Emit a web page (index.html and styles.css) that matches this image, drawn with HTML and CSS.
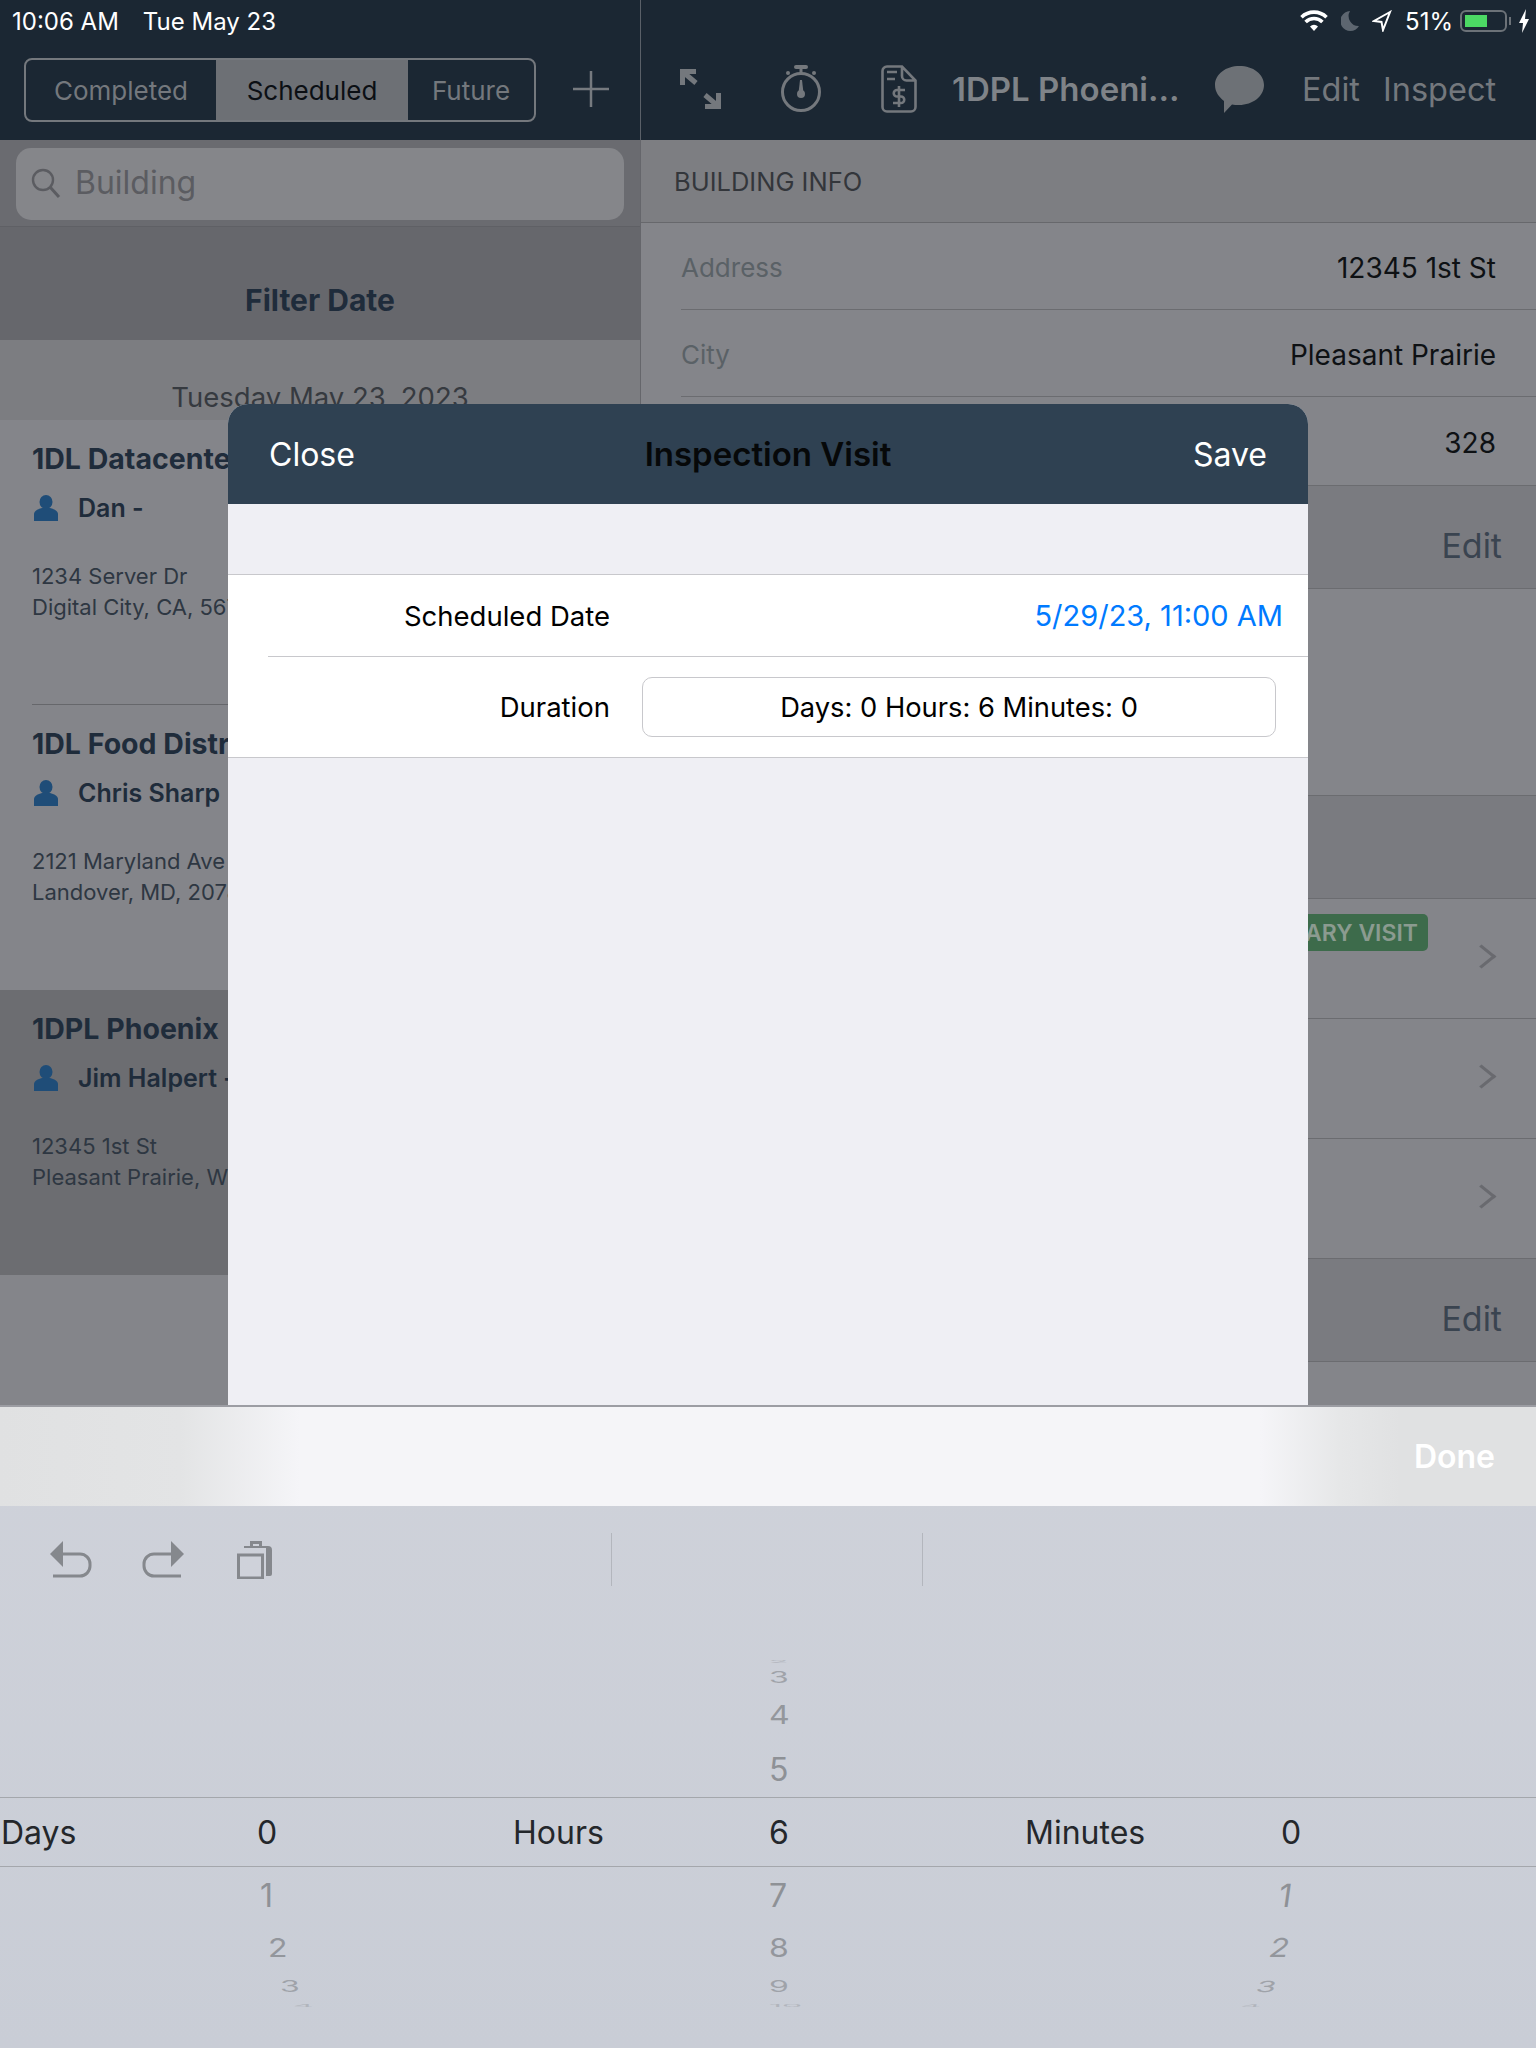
FILE: index.html
```html
<!DOCTYPE html>
<html lang="en">
<head>
    <meta charset="UTF-8">
    <title>Inspection Visit</title>
    <link rel="stylesheet" href="styles.css">
</head>
<body>
    <div class="app">
        <div class="top-bar">
            <div class="status-bar">
                <div class="status-left"><span>10:06 AM</span><span>Tue May 23</span></div>
                <div class="status-right">
                    <svg class="st-wifi" viewBox="0 0 28 22"><path d="M14 21l-4-4.600a6 6 0 0 1 8 0z" fill="#fff"/><path d="M5.600 12a12 12 0 0 1 16.800 0M1.500 7.200a18 18 0 0 1 25 0" fill="none" stroke="#fff" stroke-width="3.600"/></svg>
                    <svg class="st-moon" viewBox="0 0 18 22"><path d="M9 1a10 10 0 1 0 9 15A10 10 0 0 1 9 1z" fill="#5d6670"/></svg>
                    <svg class="st-loc" viewBox="0 0 20 22"><path d="M18 2L2 11l7.500 1L11 20z" fill="none" stroke="#fff" stroke-width="2"/></svg>
                    <span>51%</span>
                    <div class="battery"><div class="battery-fill"></div></div>
                    <div class="battery-nub"></div>
                    <svg class="st-bolt" viewBox="0 0 10 24"><path d="M7 0L0 14h4l-1 10 7-14H6z" fill="#fff"/></svg>
                </div>
            </div>
            <div class="nav-bar">
                <div class="nav-left">
                    <div class="segments">
                        <div class="segment">Completed</div>
                        <div class="segment segment-on">Scheduled</div>
                        <div class="segment segment-last">Future</div>
                    </div>
                    <svg class="plus-icon" viewBox="0 0 36 36"><path d="M18 0v36M0 18h36" stroke="#767a7f" stroke-width="2.500"/></svg>
                </div>
                <div class="nav-right">
                    <svg class="nav-expand" viewBox="0 0 41 40"><path d="M2.500 16V2.500H16M3 3l13 11M38.500 24v13.500H25M38 37L25 26" fill="none" stroke="#74787d" stroke-width="5"/></svg>
                    <svg class="nav-timer" viewBox="0 0 40 48"><circle cx="20" cy="27" r="18.500" fill="none" stroke="#74787d" stroke-width="3"/><rect x="13" y="0" width="14" height="4" rx="2" fill="#74787d"/><path d="M18.500 4h3v6h-3z" fill="#74787d"/><circle cx="7" cy="8" r="2" fill="#74787d"/><circle cx="33" cy="8" r="2" fill="#74787d"/><path d="M19 15h2l1.500 13h-5z" fill="#74787d"/><circle cx="20" cy="29" r="4" fill="#74787d"/></svg>
                    <svg class="nav-doc" viewBox="0 0 36 48"><path d="M6 1.500h15l13.500 14V42a4.500 4.500 0 0 1-4.500 4.500H6A4.500 4.500 0 0 1 1.500 42V6A4.500 4.500 0 0 1 6 1.500zM21 1.500V11a4.500 4.500 0 0 0 4.500 4.500h9M6 7h10M6 14h8" fill="none" stroke="#74787d" stroke-width="2.600"/><path d="M24 25h-8a3 3 0 0 0 0 6.500h4a3 3 0 0 1 0 6.500h-8M18 21v21" fill="none" stroke="#74787d" stroke-width="2.600"/></svg>
                    <div class="nav-title">1DPL Phoeni...</div>
                    <svg class="nav-chat" viewBox="0 0 49 48"><path d="M24.500 1C38 1 49 9 49 20S38 40 24 40c-3 0-5 0-7-.500L9 48V36C4 32 0 27 0 20 0 9 11 1 24.500 1z" fill="#6d7176"/></svg>
                    <div class="nav-links"><span>Edit</span><span>Inspect</span></div>
                </div>
            </div>
        </div>

        <div class="content">
            <div class="left-pane">
                <div class="search-row">
                    <div class="search-field">
                        <svg class="search-icon" viewBox="0 0 30 30"><circle cx="12" cy="12" r="10" fill="none" stroke="#5b5c61" stroke-width="2.400"/><path d="M19 19l9 10" stroke="#5b5c61" stroke-width="3"/></svg>
                        <span>Building</span>
                    </div>
                </div>
                <div class="filter-head">Filter Date</div>
                <div class="filter-date">Tuesday May 23, 2023</div>

                <div class="visit">
                    <div class="visit-title">1DL Datacenter</div>
                    <div class="visit-person">
                        <svg class="person-icon" viewBox="0 0 24 26"><ellipse cx="12" cy="7" rx="6.500" ry="7" fill="#1f4d78"/><path d="M0 26v-7c0-3 4-5 8-6h8c4 1 8 3 8 6v7z" fill="#1f4d78"/></svg>
                        <span>Dan -</span>
                    </div>
                    <div class="visit-address">1234 Server Dr<br>Digital City, CA, 56789</div>
                    <div class="visit-line"></div>
                </div>
                <div class="visit">
                    <div class="visit-title">1DL Food Distribution</div>
                    <div class="visit-person">
                        <svg class="person-icon" viewBox="0 0 24 26"><ellipse cx="12" cy="7" rx="6.500" ry="7" fill="#1f4d78"/><path d="M0 26v-7c0-3 4-5 8-6h8c4 1 8 3 8 6v7z" fill="#1f4d78"/></svg>
                        <span>Chris Sharp</span>
                    </div>
                    <div class="visit-address">2121 Maryland Ave<br>Landover, MD, 20785</div>
                </div>
                <div class="visit visit-on">
                    <div class="visit-title">1DPL Phoenix</div>
                    <div class="visit-person">
                        <svg class="person-icon" viewBox="0 0 24 26"><ellipse cx="12" cy="7" rx="6.500" ry="7" fill="#1f4d78"/><path d="M0 26v-7c0-3 4-5 8-6h8c4 1 8 3 8 6v7z" fill="#1f4d78"/></svg>
                        <span>Jim Halpert -</span>
                    </div>
                    <div class="visit-address">12345 1st St<br>Pleasant Prairie, WI, 53158</div>
                </div>
            </div>

            <div class="right-pane">
                <div class="section-head">BUILDING INFO</div>
                <div class="info-row"><span class="info-label">Address</span><span>12345 1st St</span></div>
                <div class="info-row"><span class="info-label">City</span><span>Pleasant Prairie</span></div>
                <div class="info-row info-row-last"><span class="info-label">Size</span><span>328</span></div>
                <div class="edit-head">Edit</div>
                <div class="blank-block"></div>
                <div class="edit-head edit-head-empty"></div>
                <div class="visit-row"><span class="badge">PRIMARY VISIT</span><span class="chevron"></span></div>
                <div class="visit-row"><span class="chevron"></span></div>
                <div class="visit-row"><span class="chevron"></span></div>
                <div class="edit-head">Edit</div>
            </div>

            <div class="modal">
                <div class="modal-head">
                    <span>Close</span>
                    <span class="modal-title">Inspection Visit</span>
                    <span>Save</span>
                </div>
                <div class="modal-rows">
                    <div class="form-row form-row-date">
                        <span class="form-label">Scheduled Date</span>
                        <span class="form-date">5/29/23, 11:00 AM</span>
                    </div>
                    <div class="form-row form-row-duration">
                        <span class="form-label">Duration</span>
                        <div class="duration-box">Days: 0 Hours: 6 Minutes: 0</div>
                    </div>
                </div>
            </div>
        </div>
    </div>

    <div class="keyboard">
        <div class="kb-accessory"><span>Done</span></div>
        <div class="kb-tools">
            <div class="kb-icons">
                <svg class="kb-icon" viewBox="0 0 42 37"><path d="M0 13L13 0v26z" fill="#85888d"/><path d="M10 13h20a10 10 0 0 1 10 10v2a10 10 0 0 1-10 10H3" fill="none" stroke="#85888d" stroke-width="3"/></svg>
                <svg class="kb-icon" viewBox="0 0 42 37"><path d="M42 13L29 0v26z" fill="#85888d"/><path d="M32 13H12A10 10 0 0 0 2 23v2a10 10 0 0 0 10 10h27" fill="none" stroke="#85888d" stroke-width="3"/></svg>
                <svg class="kb-icon kb-paste" viewBox="0 0 36 38"><path d="M7 7V5h6V0h12v5h6a4 4 0 0 1 4 4v24a2 2 0 0 1-2 2h-4V7z" fill="#85888d"/><path d="M16 3h6v2h-6z" fill="#cfd2da"/><path d="M1.500 14h24v23h-24z" fill="#cfd2da" stroke="#85888d" stroke-width="3"/></svg>
            </div>
            <div class="kb-divider"></div>
            <div class="kb-divider kb-divider-2"></div>
        </div>
        <div class="wheel-rows wheel-upper">
            <div class="wheel-col"></div>
            <div class="wheel-col">
                <div></div>
                <div class="wheel-nums">
                    <span class="num num-edge">2</span>
                    <span class="num num-far">3</span>
                    <span class="num num-mid">4</span>
                    <span class="num num-near">5</span>
                </div>
            </div>
            <div class="wheel-col"></div>
        </div>
        <div class="wheel-rows wheel-band">
            <div class="wheel-col"><span class="wheel-label">Days</span><span class="wheel-value">0</span></div>
            <div class="wheel-col"><span class="wheel-label">Hours</span><span class="wheel-value">6</span></div>
            <div class="wheel-col"><span class="wheel-label">Minutes</span><span class="wheel-value">0</span></div>
        </div>
        <div class="wheel-rows wheel-lower">
            <div class="wheel-col wheel-first">
                <div></div>
                <div class="wheel-nums">
                    <span class="num num-near">1</span>
                    <span class="num num-mid">2</span>
                    <span class="num num-far">3</span>
                    <span class="num num-edge">4</span>
                </div>
            </div>
            <div class="wheel-col">
                <div></div>
                <div class="wheel-nums">
                    <span class="num num-near">7</span>
                    <span class="num num-mid">8</span>
                    <span class="num num-far">9</span>
                    <span class="num num-edge">10</span>
                </div>
            </div>
            <div class="wheel-col wheel-last">
                <div></div>
                <div class="wheel-nums">
                    <span class="num num-near">1</span>
                    <span class="num num-mid">2</span>
                    <span class="num num-far">3</span>
                    <span class="num num-edge">4</span>
                </div>
            </div>
        </div>
    </div>
</body>
</html>
```

FILE: styles.css
```css
html, body {
    margin: 0;
    padding: 0;
}
body {
    width: 1536px;
    height: 2048px;
    overflow: hidden;
    font-family: Inter, "Liberation Sans", sans-serif;
    background-color: #cfd2da;
}
svg {
    display: block;
    flex-shrink: 0;
}

.app {
    height: 1405px;
    display: flex;
    flex-direction: column;
}

/* top bars */
.top-bar {
    height: 140px;
    background-color: #1b2733;
    background-image: linear-gradient(#5a6068, #5a6068);
    background-size: 1px 100%;
    background-position: 640px 0;
    background-repeat: no-repeat;
}
.status-bar {
    height: 42px;
    display: flex;
    justify-content: space-between;
    align-items: center;
    color: white;
    font-size: 24px;
}
.status-left {
    display: flex;
    gap: 24px;
    padding-left: 12px;
}
.status-right {
    display: flex;
    align-items: center;
    padding-right: 7px;
}
.st-wifi { width: 28px; height: 22px; margin-right: 13px; }
.st-moon { width: 18px; height: 22px; margin-right: 13px; }
.st-loc { width: 20px; height: 22px; margin-right: 13px; }
.battery {
    width: 47px;
    height: 22px;
    box-sizing: border-box;
    margin-left: 7px;
    padding: 3px;
    border: 2px solid #6c7278;
    border-radius: 6px;
}
.battery-fill {
    width: 22px;
    height: 100%;
    background-color: #4cd964;
}
.battery-nub {
    width: 2px;
    height: 8px;
    margin-left: 2px;
    background-color: #6c7278;
}
.st-bolt { width: 10px; height: 24px; margin-left: 8px; }

.nav-bar {
    display: flex;
    height: 98px;
}
.nav-left {
    width: 641px;
    display: flex;
    align-items: flex-start;
    padding: 16px 0 0 24px;
    box-sizing: border-box;
}
.segments {
    width: 512px;
    height: 64px;
    box-sizing: border-box;
    display: flex;
    border: 2px solid #74787d;
    border-radius: 8px;
    overflow: hidden;
    font-size: 26px;
    color: #74787d;
}
.segment {
    width: 190px;
    display: flex;
    align-items: center;
    justify-content: center;
    flex-shrink: 0;
}
.segment-on {
    width: 192px;
    background-color: #6d7075;
    color: #0b0f14;
}
.segment-last {
    width: 126px;
}
.plus-icon {
    width: 36px;
    height: 36px;
    margin: 13px 0 0 37px;
}
.nav-right {
    flex: 1;
    display: flex;
    align-items: center;
    color: #74787d;
    font-size: 32.500px;
    padding-bottom: 4px;
    box-sizing: border-box;
}
.nav-expand { width: 41px; height: 40px; margin: 0 0 0 39px; }
.nav-timer { width: 40px; height: 48px; margin-left: 60px; }
.nav-doc { width: 36px; height: 48px; margin-left: 60px; }
.nav-title {
    font-size: 33px;
    font-weight: 600;
    margin-left: 35px;
    width: 263px;
    white-space: nowrap;
    color: #7f8388;
}
.nav-chat { width: 49px; height: 48px; }
.nav-links {
    display: flex;
    gap: 23px;
    margin-left: 38px;
}

/* panes under the bars */
.content {
    flex: 1;
    display: flex;
    position: relative;
    overflow: hidden;
}
.left-pane {
    width: 640px;
    background-color: #84858a;
    flex-shrink: 0;
}
.search-row {
    height: 87px;
    box-sizing: border-box;
    padding: 8px 16px 0;
    background-color: #6a6b70;
    border-bottom: 1px solid #5f6065;
}
.search-field {
    height: 72px;
    box-sizing: border-box;
    display: flex;
    align-items: center;
    gap: 14px;
    padding: 0 0 3px 15px;
    background-color: #85868a;
    border-radius: 15px;
    font-size: 32px;
    color: #5b5c61;
}
.search-icon { width: 30px; height: 30px; }
.filter-head {
    height: 113px;
    box-sizing: border-box;
    padding-top: 55px;
    text-align: center;
    background-color: #66676c;
    color: #1f2c3b;
    font-size: 30px;
    font-weight: 700;
}
.filter-date {
    height: 80px;
    box-sizing: border-box;
    padding-top: 40px;
    text-align: center;
    background-color: #7c7d81;
    color: #363a40;
    font-size: 27.500px;
}
.visit {
    height: 285px;
    box-sizing: border-box;
    padding: 22px 0 0 32px;
    position: relative;
    white-space: nowrap;
    color: #1f2c3b;
}
.visit-on {
    background-color: #6c6d71;
}
.visit-title {
    font-size: 28.500px;
    font-weight: 700;
    line-height: 34px;
}
.visit-person {
    display: flex;
    align-items: center;
    gap: 20px;
    margin-top: 17px;
    padding-left: 2px;
    font-size: 25px;
    font-weight: 600;
}
.person-icon { width: 24px; height: 26px; }
.visit-address {
    margin-top: 38px;
    font-size: 22px;
    line-height: 31px;
    color: #2e3742;
}
.visit-line {
    position: absolute;
    left: 32px;
    right: 0;
    bottom: 0;
    height: 1px;
    background-color: #66676b;
}

.right-pane {
    flex: 1;
    background-color: #84858a;
    border-left: 1px solid #65666b;
    color: #0e1114;
    font-size: 28px;
}
.section-head {
    height: 83px;
    box-sizing: border-box;
    padding: 26px 0 0 33px;
    background-color: #7d7e82;
    border-bottom: 1px solid #67686c;
    color: #33363b;
    font-size: 25.500px;
}
.info-row {
    height: 87px;
    margin-left: 40px;
    box-sizing: border-box;
    padding: 3px 40px 0 0;
    display: flex;
    align-items: center;
    justify-content: space-between;
    border-bottom: 1px solid #6b6c70;
}
.info-row-last {
    margin-left: 0;
    padding-left: 40px;
    height: 89px;
}
.info-label {
    color: #5a6166;
    font-size: 26px;
}
.edit-head {
    height: 103px;
    box-sizing: border-box;
    padding: 16px 34px 0 0;
    display: flex;
    align-items: center;
    justify-content: flex-end;
    background-color: #7a7b80;
    border-bottom: 1px solid #6b6c70;
    color: #3a4450;
    font-size: 34px;
}
.blank-block {
    height: 207px;
    border-bottom: 1px solid #6b6c70;
    box-sizing: border-box;
}
.visit-row {
    height: 120px;
    box-sizing: border-box;
    border-bottom: 1px solid #6b6c70;
    position: relative;
}
.badge {
    position: absolute;
    top: 15px;
    right: 108px;
    height: 37px;
    box-sizing: border-box;
    padding: 0 10px;
    line-height: 38px;
    background-color: #3d6b4b;
    border-radius: 5px;
    color: #8b9b90;
    font-size: 23px;
    font-weight: 600;
    white-space: nowrap;
}
.chevron {
    position: absolute;
    top: 48px;
    right: 45px;
    width: 19px;
    height: 19px;
    box-sizing: border-box;
    border-top: 3px solid #696a6f;
    border-right: 3px solid #696a6f;
    transform: rotate(45deg) skew(-6deg, -6deg);
}

/* modal sheet */
.modal {
    position: absolute;
    left: 228px;
    top: 264px;
    width: 1080px;
    bottom: 0;
    background-color: #efeff4;
    border-radius: 20px 20px 0 0;
    overflow: hidden;
}
.modal-head {
    height: 100px;
    display: flex;
    align-items: center;
    justify-content: space-between;
    padding: 0 41px 0 41px;
    background-color: #2f4152;
    color: white;
    font-size: 32px;
    position: relative;
}
.modal-title {
    position: absolute;
    left: 0;
    right: 0;
    text-align: center;
    font-weight: 600;
    font-size: 33px;
    color: #060809;
}
.modal-rows {
    margin-top: 70px;
    background-color: white;
    border-top: 1px solid #c8c8cc;
    border-bottom: 1px solid #c8c8cc;
    font-size: 27.500px;
    color: black;
}
.form-row {
    display: flex;
    align-items: center;
}
.form-row-date {
    height: 81px;
    margin-left: 40px;
    padding-right: 25px;
    justify-content: space-between;
    border-bottom: 1px solid #c8c8cc;
}
.form-row-date .form-label {
    width: 342px;
    text-align: right;
}
.form-row-duration {
    height: 100px;
}
.form-row-duration .form-label {
    width: 382px;
    text-align: right;
}
.form-date {
    color: #007aff;
    font-size: 29px;
}
.duration-box {
    width: 634px;
    height: 60px;
    box-sizing: border-box;
    margin-left: 32px;
    border: 1px solid #c8c8cc;
    border-radius: 10px;
    display: flex;
    align-items: center;
    justify-content: center;
    font-size: 27.300px;
}

/* keyboard and picker */
.keyboard {
    height: 643px;
    border-top: 2px solid #9c9da3;
    box-sizing: border-box;
    background: linear-gradient(#cfd2da, #c9cdd6);
}
.kb-accessory {
    height: 99px;
    display: flex;
    align-items: center;
    justify-content: flex-end;
    padding-right: 41px;
    background: linear-gradient(90deg, #e0e1e2 0, #e3e4e5 180px, #f5f5f8 300px, #f5f5f8 1260px, #e6e7e8 1340px, #e0e1e2 1400px);
    color: white;
    font-size: 32px;
    font-weight: 600;
}
.kb-tools {
    height: 94px;
    display: flex;
    align-items: flex-start;
    padding-left: 50px;
}
.kb-icons {
    width: 561px;
    display: flex;
    gap: 50px;
    padding-top: 35px;
}
.kb-icon { width: 42px; height: 37px; }
.kb-paste { width: 36px; height: 38px; margin-left: 3px; }
.kb-divider {
    width: 1px;
    height: 53px;
    margin-top: 27px;
    background-color: #b3b6bd;
}
.kb-divider-2 {
    margin-left: 310px;
}
.wheel-rows {
    display: grid;
    grid-template-columns: repeat(3, 512px);
}
.wheel-upper {
    height: 197px;
    align-items: end;
}
.wheel-band {
    height: 70px;
    box-sizing: border-box;
    border-top: 1px solid #a4a7ac;
    border-bottom: 1px solid #a4a7ac;
    align-items: center;
    color: #24272b;
    font-size: 32px;
}
.wheel-col {
    display: grid;
    grid-template-columns: 256px 256px;
}
.wheel-label {
    padding-left: 1px;
}
.wheel-value {
    padding-left: 1px;
}
.wheel-nums {
    display: flex;
    flex-direction: column;
    align-items: flex-start;
    padding-left: 1px;
    color: #8e9196;
    font-size: 32px;
}
.num {
    display: block;
    line-height: 1;
    transform-origin: center;
}
/* the wheel flattens toward its rim */
.num-near { height: 54px; padding-top: 13px; box-sizing: border-box; }
.num-mid { height: 52px; padding-top: 11px; box-sizing: border-box; transform: scaleY(.82); opacity: .9; }
.num-far { height: 26px; margin-top: -1px; transform: scaleY(.48); opacity: .7; }
.num-edge { height: 12px; transform: scaleY(.12); opacity: .4; }
.wheel-upper .num-near { height: 54px; padding-top: 11px; }
.wheel-upper .num-mid { height: 54px; padding-top: 10px; }
.wheel-upper .num-far { margin-top: -2px; height: 26px; }
.wheel-upper .num-edge { height: 10px; }
.wheel-first .num-near { transform: translateX(3px); }
.wheel-first .num-mid { transform: translateX(11px) scaleY(.82); }
.wheel-first .num-far { transform: translateX(23px) scaleY(.48); }
.wheel-first .num-edge { transform: translateX(36px) scaleY(.12); }
.wheel-last .num-near { transform: translateX(-2px) skewX(-8deg); }
.wheel-last .num-mid { transform: translateX(-11px) skewX(-14deg) scaleY(.82); }
.wheel-last .num-far { transform: translateX(-24px) skewX(-20deg) scaleY(.48); }
.wheel-last .num-edge { transform: translateX(-40px) skewX(-20deg) scaleY(.12); }
```
